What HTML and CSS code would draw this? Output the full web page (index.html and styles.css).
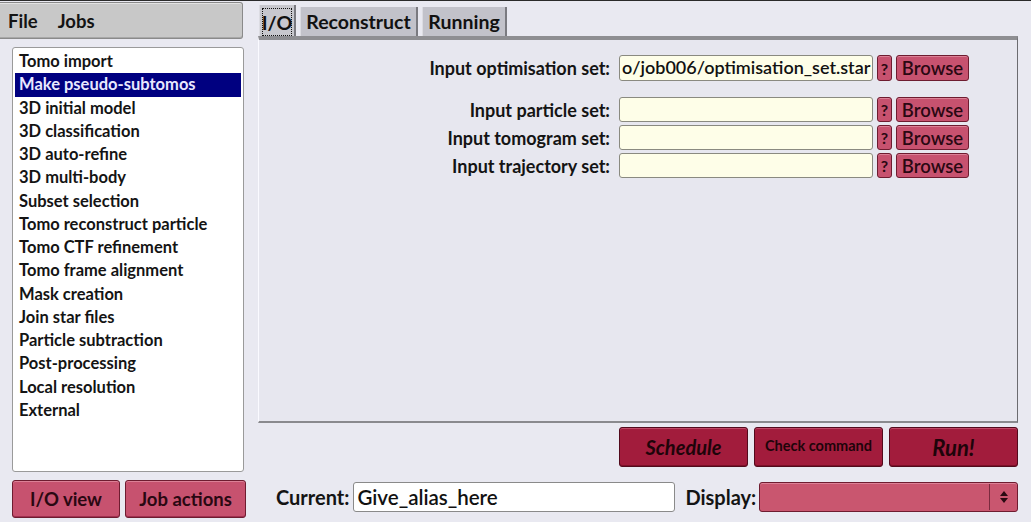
FILE: index.html
```html
<!DOCTYPE html>
<html>
<head>
<meta charset="utf-8">
<title>RELION</title>
<link rel="stylesheet" href="styles.css">
</head>
<body>
<div class="app">
  <div class="left">
    <div class="menubar"><span class="menu">File</span><span class="menu">Jobs</span></div>
    <ul class="joblist">
      <li>Tomo import</li>
      <li class="sel">Make pseudo-subtomos</li>
      <li>3D initial model</li>
      <li>3D classification</li>
      <li>3D auto-refine</li>
      <li>3D multi-body</li>
      <li>Subset selection</li>
      <li>Tomo reconstruct particle</li>
      <li>Tomo CTF refinement</li>
      <li>Tomo frame alignment</li>
      <li>Mask creation</li>
      <li>Join star files</li>
      <li>Particle subtraction</li>
      <li>Post-processing</li>
      <li>Local resolution</li>
      <li>External</li>
    </ul>
    <div class="leftbtns">
      <div class="btn pink io">I/O view</div>
      <div class="btn pink ja">Job actions</div>
    </div>
  </div>
  <div class="right">
    <div class="tabs">
      <div class="tab active"><span class="focus">I/O</span></div>
      <div class="tab t-rec">Reconstruct</div>
      <div class="tab t-run">Running</div>
    </div>
    <div class="panel">
      <div class="form">
        <div class="row first">
          <div class="label">Input optimisation set:</div>
          <div class="input">o/job006/optimisation_set.star</div>
          <div class="help">?</div>
          <div class="browse">Browse</div>
        </div>
        <div class="row">
          <div class="label">Input particle set:</div>
          <div class="input"></div>
          <div class="help">?</div>
          <div class="browse">Browse</div>
        </div>
        <div class="row">
          <div class="label">Input tomogram set:</div>
          <div class="input"></div>
          <div class="help">?</div>
          <div class="browse">Browse</div>
        </div>
        <div class="row">
          <div class="label">Input trajectory set:</div>
          <div class="input"></div>
          <div class="help">?</div>
          <div class="browse">Browse</div>
        </div>
      </div>
    </div>
    <div class="actions">
      <div class="btn dark big">Schedule</div>
      <div class="btn dark small">Check command</div>
      <div class="btn dark big run">Run!</div>
    </div>
    <div class="bottom">
      <div class="blabel">Current:</div>
      <div class="alias">Give_alias_here</div>
      <div class="blabel disp">Display:</div>
      <div class="select">
        <span class="sep"></span>
        <svg class="arrows" width="10" height="14" viewBox="0 0 10 14"><path d="M1 6 L5 1 L9 6 Z M1 8 L5 13 L9 8 Z" fill="#2a0a12"/></svg>
      </div>
    </div>
  </div>
</div>
</body>
</html>
```
FILE: styles.css
```css
* { box-sizing: border-box; }
html, body {
  margin: 0;
  padding: 0;
  width: 1031px;
  height: 522px;
  overflow: hidden;
  background: #e9e9f1;
  font-family: "Lato", "Liberation Sans", sans-serif;
  font-weight: 700;
  color: #141414;
}
.app {
  display: flex;
  height: 522px;
  border-top: 1px solid #2a2a2a;
}
.left {
  width: 258px;
  display: flex;
  flex-direction: column;
}
.menubar {
  width: 243px;
  height: 37px;
  margin-top: 1px;
  background: #c8c8c8;
  border: 1px solid #8a8a8a;
  border-left: none;
  border-radius: 0 3px 3px 0;
  box-shadow: inset 0 1px 0 #e2e2e2, inset 0 -1px 0 #a8a8a8;
  display: flex;
  align-items: center;
  padding-left: 8px;
  font-size: 18.5px;
  gap: 20px;
}
.joblist {
  list-style: none;
  margin: 8px 0 0 12px;
  padding: 2px 2px;
  width: 232px;
  height: 425px;
  background: #fff;
  border: 1px solid #9a9a9a;
  border-radius: 3px;
  font-size: 16.5px;
}
.joblist li {
  height: 23.25px;
  line-height: 23.25px;
  padding-left: 4px;
  white-space: nowrap;
}
.joblist li.sel {
  background: #000080;
  color: #e8e8ff;
}
.leftbtns {
  display: flex;
  margin: 8px 0 0 12px;
  gap: 5px;
}
.btn {
  display: flex;
  align-items: center;
  justify-content: center;
  border-radius: 3px;
  white-space: nowrap;
}
.pink {
  background: #c7526f;
  border: 1px solid #6e1c30;
  box-shadow: inset 0 1px 0 #dc8096, inset 0 -1px 0 #a03050;
  color: #2a0812;
}
.leftbtns .btn {
  height: 38px;
  font-size: 18.5px;
}
.leftbtns .io { width: 108px; }
.leftbtns .ja { width: 121px; }

.right {
  width: 773px;
  display: flex;
  flex-direction: column;
}
.tabs {
  height: 35px;
  display: flex;
  align-items: flex-end;
  gap: 4px;
  padding-left: 1px;
}
.tab {
  height: 29px;
  background: #c2c2ca;
  border-left: 1px solid #dcdce2;
  border-right: 2px solid #7a7a80;
  font-size: 19.5px;
  display: flex;
  align-items: center;
  justify-content: center;
  color: #111;
}
.tab.active {
  height: 31px;
  width: 37px;
  background: #c8c8ce;
  padding: 3px 2px 0 2px;
}
.tab.active .focus {
  display: flex;
  align-items: center;
  justify-content: center;
  width: 100%;
  height: 100%;
  border: 1px dotted #111;
}
.t-rec { width: 118px; }
.t-run { width: 85px; }
.panel {
  width: 760px;
  height: 387px;
  background: #e7e7ef;
  border-top: 4px solid #8e8e92;
  border-left: 1px solid #fafaff;
  border-right: 1px solid #6c6c70;
  border-bottom: 2px solid #8a8a8e;
}
.form {
  padding-top: 15px;
  display: flex;
  flex-direction: column;
  gap: 3px;
}
.row {
  display: flex;
  align-items: center;
  height: 25px;
}
.row.first {
  height: 26px;
  margin-bottom: 13px;
}
.label {
  width: 351px;
  text-align: right;
  font-size: 18px;
  white-space: nowrap;
}
.input {
  margin-left: 9px;
  width: 254px;
  height: 100%;
  background: #fefee8;
  border: 1px solid #8a8a80;
  border-radius: 3px;
  font-size: 18px;
  padding-left: 2px;
  line-height: 23px;
  white-space: nowrap;
  overflow: hidden;
  font-weight: 600;
  color: #111;
}
.help {
  margin-left: 4px;
  width: 15px;
  height: 100%;
  background: #c7526f;
  border: 1px solid #6e1c30;
  border-radius: 3px;
  box-shadow: inset 0 1px 0 #dc8096;
  font-size: 16px;
  display: flex;
  align-items: center;
  justify-content: center;
  color: #2a0812;
}
.browse {
  margin-left: 4px;
  width: 73px;
  height: 100%;
  background: #c7526f;
  border: 1px solid #6e1c30;
  border-radius: 3px;
  box-shadow: inset 0 1px 0 #dc8096;
  font-size: 18.5px;
  font-weight: 600;
  display: flex;
  align-items: center;
  justify-content: center;
  color: #2a0812;
}
.actions {
  display: flex;
  justify-content: flex-end;
  gap: 6px;
  margin-top: 4px;
  width: 760px;
}
.dark {
  width: 129px;
  height: 40px;
  background: #a21c3c;
  border: 1px solid #520a1c;
  box-shadow: inset 0 1px 0 #c04866, inset 0 -1px 0 #7e1028;
  color: #1e040a;
}
.dark.big {
  font-style: italic;
  font-size: 20px;
}
.dark.run { font-size: 22px; }
.dark.small {
  font-size: 14.5px;
  padding-bottom: 3px;
}
.bottom {
  display: flex;
  align-items: center;
  margin-top: 15px;
  height: 30px;
  width: 760px;
  padding-left: 18px;
}
.blabel {
  font-size: 20px;
  white-space: nowrap;
}
.alias {
  margin-left: 4px;
  width: 322px;
  height: 30px;
  background: #fff;
  border: 1px solid #8a8a8a;
  border-radius: 3px;
  font-size: 20.5px;
  font-weight: 600;
  padding-left: 3px;
  line-height: 28px;
  color: #111;
}
.disp { margin-left: 10px; }
.select {
  margin-left: 3px;
  flex: 1;
  height: 30px;
  background: #c9566f;
  border: 1px solid #6e1c30;
  border-radius: 3px;
  box-shadow: inset 0 1px 0 #dc8096;
  display: flex;
  align-items: center;
  justify-content: flex-end;
  padding-right: 8px;
}
.sep {
  width: 1px;
  height: 26px;
  background: #7a2a3e;
  margin-right: 9px;
}
.arrows { display: block; }
```
